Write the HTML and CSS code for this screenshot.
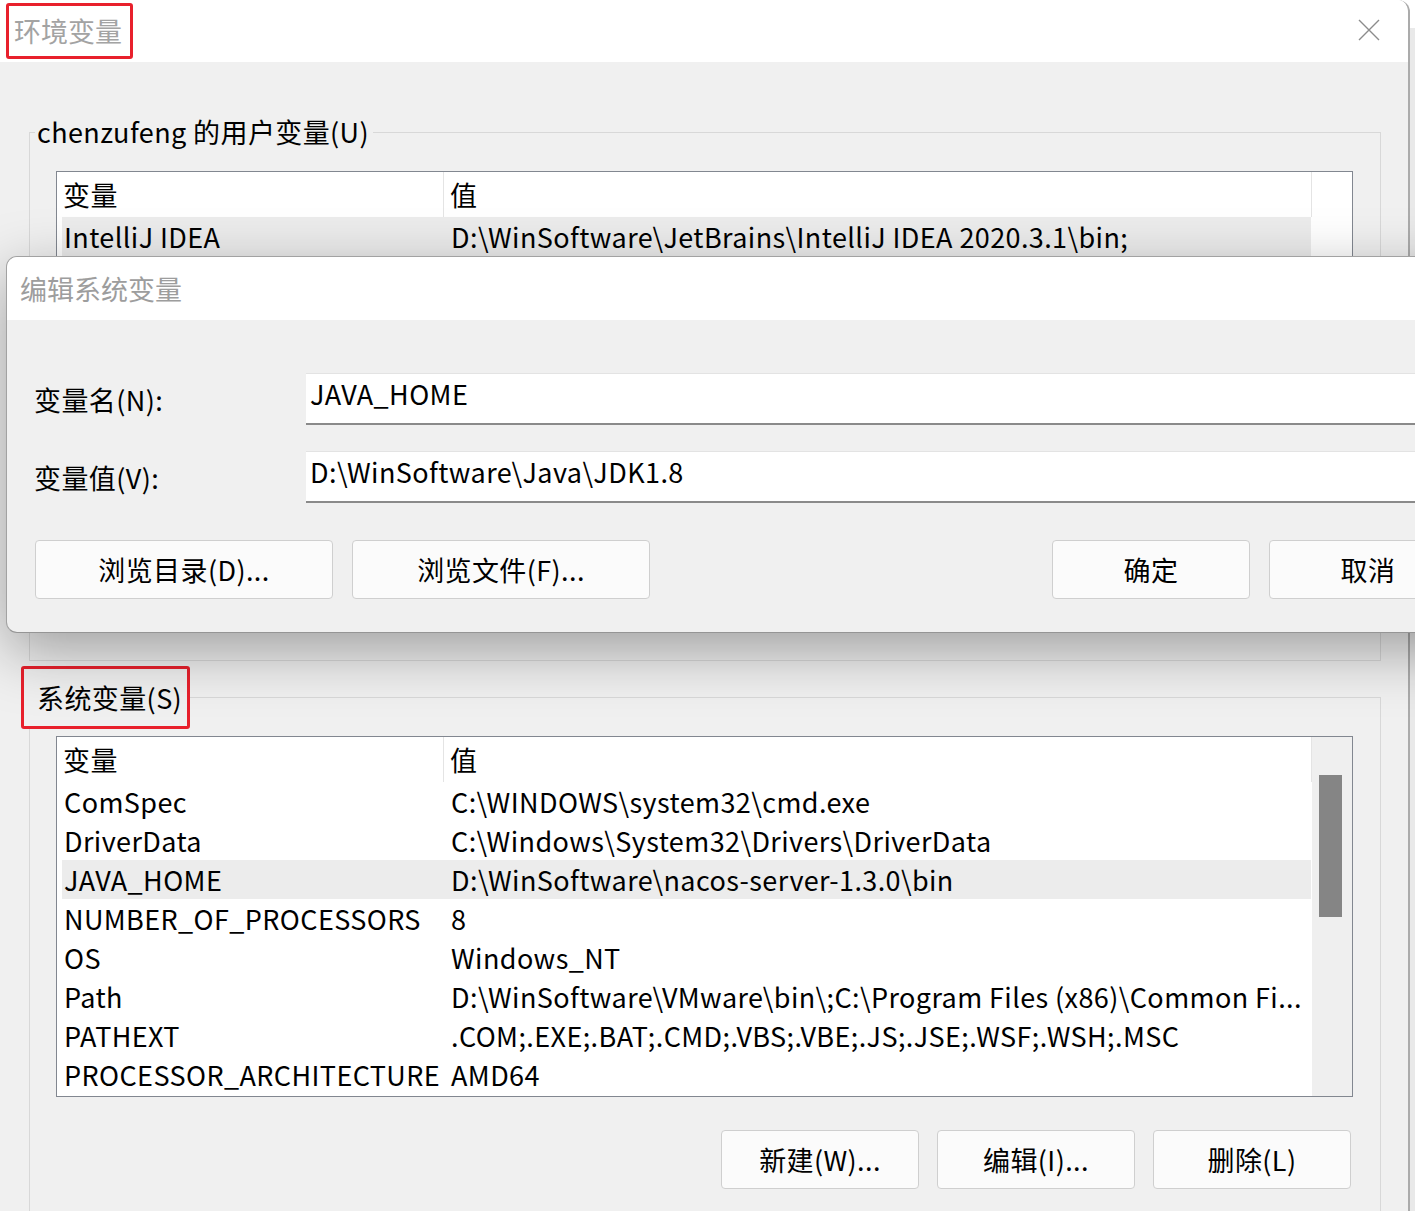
FILE: index.html
```html
<!DOCTYPE html>
<html lang="zh-CN">
<head>
<meta charset="utf-8">
<title>环境变量</title>
<link rel="stylesheet" href="styles.css">
</head>
<body>
<div class="win">
  <div class="titlebar">
    <div class="mark title-mark"><span class="title">环境变量</span></div>
    <svg class="close" width="24" height="24" viewBox="0 0 24 24"><path d="M2 2 L22 22 M22 2 L2 22" stroke="#8c8c8c" stroke-width="1.4" fill="none"/></svg>
  </div>
  <div class="win-body">
    <section class="group group-user">
      <div class="legend">chenzufeng 的用户变量(U)</div>
      <div class="list list-user">
        <div class="list-head">
          <div class="hcell hname">变量</div>
          <div class="hcell hval">值</div>
          <div class="hcell hrest"></div>
        </div>
        <div class="list-main">
          <div class="rows">
            <div class="row sel"><span class="c1">IntelliJ IDEA</span><span class="c2">D:\WinSoftware\JetBrains\IntelliJ IDEA 2020.3.1\bin;</span></div>
          </div>
        </div>
      </div>
    </section>

    <section class="group group-sys">
      <div class="mark legend-mark"><span class="legend-text">系统变量(S)</span></div>
      <div class="list list-sys">
        <div class="list-head">
          <div class="hcell hname">变量</div>
          <div class="hcell hval">值</div>
        </div>
        <div class="rows">
          <div class="row"><span class="c1">ComSpec</span><span class="c2">C:\WINDOWS\system32\cmd.exe</span></div>
          <div class="row"><span class="c1">DriverData</span><span class="c2">C:\Windows\System32\Drivers\DriverData</span></div>
          <div class="row sel"><span class="c1">JAVA_HOME</span><span class="c2">D:\WinSoftware\nacos-server-1.3.0\bin</span></div>
          <div class="row"><span class="c1">NUMBER_OF_PROCESSORS</span><span class="c2">8</span></div>
          <div class="row"><span class="c1">OS</span><span class="c2">Windows_NT</span></div>
          <div class="row"><span class="c1">Path</span><span class="c2">D:\WinSoftware\VMware\bin\;C:\Program Files (x86)\Common Fi...</span></div>
          <div class="row"><span class="c1">PATHEXT</span><span class="c2">.COM;.EXE;.BAT;.CMD;.VBS;.VBE;.JS;.JSE;.WSF;.WSH;.MSC</span></div>
          <div class="row"><span class="c1">PROCESSOR_ARCHITECTURE</span><span class="c2">AMD64</span></div>
        </div>
        <div class="scrollbar"><div class="thumb"></div></div>
      </div>
      <div class="btn-row">
        <button class="btn btn-sm">新建(W)...</button>
        <button class="btn btn-sm">编辑(I)...</button>
        <button class="btn btn-sm">删除(L)</button>
      </div>
    </section>
  </div>
</div>

<div class="dialog">
  <div class="dlg-title">编辑系统变量</div>
  <div class="dlg-body">
    <div class="field-row">
      <label class="flabel">变量名(N):</label>
      <div class="finput">JAVA_HOME</div>
    </div>
    <div class="field-row row2">
      <label class="flabel">变量值(V):</label>
      <div class="finput">D:\WinSoftware\Java\JDK1.8</div>
    </div>
    <div class="dlg-btns">
      <button class="btn btn-lg">浏览目录(D)...</button>
      <button class="btn btn-lg">浏览文件(F)...</button>
      <button class="btn btn-sm btn-ok">确定</button>
      <button class="btn btn-sm">取消</button>
    </div>
  </div>
</div>
</body>
</html>
```

FILE: styles.css
```css
html, body {
  margin: 0;
  padding: 0;
}
body {
  width: 1415px;
  height: 1211px;
  overflow: hidden;
  position: relative;
  background: linear-gradient(#ffffff 0 28px, #e9e9e9 28px);
  font-family: "Noto Sans CJK SC", "Noto Sans", sans-serif;
  font-size: 27px;
  letter-spacing: 0.4px;
  color: #000;
}

.win {
  width: 1410px;
  height: 1211px;
  box-sizing: border-box;
  border-right: 2px solid #ababab;
  border-top-left-radius: 10px;
  border-top-right-radius: 12px;
  overflow: hidden;
  display: flex;
  flex-direction: column;
}

.titlebar {
  height: 62px;
  flex: none;
  background: #fff;
  display: flex;
  align-items: flex-start;
  justify-content: space-between;
  padding: 3px 27px 0 6px;
  box-sizing: border-box;
}
.mark {
  border: 3px solid #e8202c;
  border-radius: 3px;
  box-sizing: border-box;
}
.title-mark {
  width: 127px;
  height: 56px;
  padding-left: 5px;
  line-height: 50px;
  letter-spacing: 0;
}
.title {
  color: #a3a3a3;
  font-size: 27px;
}
.close {
  margin-top: 15px;
}

.win-body {
  flex: 1;
  background: #f0f0f0;
  padding-top: 70px;
}

.group {
  margin-left: 29px;
  width: 1352px;
  box-sizing: border-box;
  border: 1px solid #d8d8d8;
}
.group-user {
  height: 529px;
}
.group-sys {
  margin-top: 36px;
  height: 600px;
}

.legend {
  display: block;
  width: max-content;
  margin-top: -19px;
  margin-left: 5px;
  padding: 0 4px 0 2px;
  background: #f0f0f0;
  line-height: 36px;
  height: 36px;
}
.legend-mark {
  display: block;
  width: 169px;
  height: 63px;
  margin-top: -32px;
  margin-left: -9px;
  padding-left: 13px;
  line-height: 57px;
  background: #f0f0f0;
}

.list {
  margin-left: 26px;
  width: 1297px;
  box-sizing: border-box;
  border: 1px solid #828790;
  background: #fff;
  overflow: hidden;
  position: relative;
}
.list-user {
  margin-top: 21px;
  height: 440px;
}
.list-sys {
  margin-top: 7px;
  height: 361px;
}

.list-head {
  display: flex;
  height: 45px;
  width: 1255px;
}
.hcell {
  line-height: 46px;
  box-sizing: border-box;
}
.hname {
  width: 387px;
  padding-left: 6px;
  border-right: 1px solid #e4e4e4;
}
.hval {
  width: 868px;
  padding-left: 6px;
  border-right: 1px solid #e4e4e4;
}
.list-user .list-head {
  width: 1295px;
}
.hrest {
  flex: 1;
  border-right: none;
}

.list-main {
  display: flex;
}
.rows {
  width: 1254px;
  padding-left: 5px;
  box-sizing: border-box;
}
.row {
  display: flex;
  height: 39px;
  line-height: 39px;
  white-space: nowrap;
}
.row.sel {
  background: #ececec;
}
.list-user .row.sel {
  height: 40px;
}
.c1 {
  width: 382px;
  padding-left: 2px;
  box-sizing: border-box;
}
.c2 {
  padding-left: 7px;
}

.scrollbar {
  position: absolute;
  left: 1255px;
  top: 0;
  width: 40px;
  height: 100%;
  background: #efefef;
  box-sizing: border-box;
  padding: 38px 0 0 7px;
}
.thumb {
  width: 23px;
  height: 142px;
  background: #858585;
}

.btn-row {
  display: flex;
  justify-content: flex-end;
  gap: 18px;
  margin-top: 33px;
  padding-right: 29px;
}
.btn {
  font-family: inherit;
  font-size: 27px;
  letter-spacing: 0.4px;
  color: #000;
  background: #fbfbfb;
  border: 1px solid #cfcfcf;
  border-radius: 4px;
  height: 59px;
  padding: 0;
  box-sizing: border-box;
}
.btn-sm {
  width: 198px;
}
.btn-lg {
  width: 298px;
}

.dialog {
  position: absolute;
  left: 6px;
  top: 256px;
  width: 1500px;
  height: 377px;
  box-sizing: border-box;
  border: 1px solid #a2a2a2;
  border-bottom-color: #959595;
  border-radius: 11px 0 0 11px;
  background: #f0f0f0;
  overflow: hidden;
  box-shadow: 0 18px 60px rgba(0, 0, 0, 0.34);
}
.dlg-title {
  height: 63px;
  background: #fff;
  color: #9d9d9d;
  padding-left: 13px;
  line-height: 64px;
  letter-spacing: 0;
}
.dlg-body {
  padding: 53px 0 0 27px;
}
.field-row {
  display: flex;
  align-items: center;
}
.row2 {
  margin-top: 26px;
}
.flabel {
  width: 272px;
  padding-top: 1px;
}
.finput {
  flex: 1;
  height: 52px;
  box-sizing: border-box;
  background: #fff;
  border-top: 1px solid #e3e3e3;
  border-bottom: 2px solid #8a8a8a;
  padding: 0 0 0 4px;
  line-height: 40px;
}
.dlg-btns {
  display: flex;
  margin-top: 37px;
  padding-left: 1px;
  gap: 19px;
}
.btn-ok {
  margin-left: 383px;
}
```
